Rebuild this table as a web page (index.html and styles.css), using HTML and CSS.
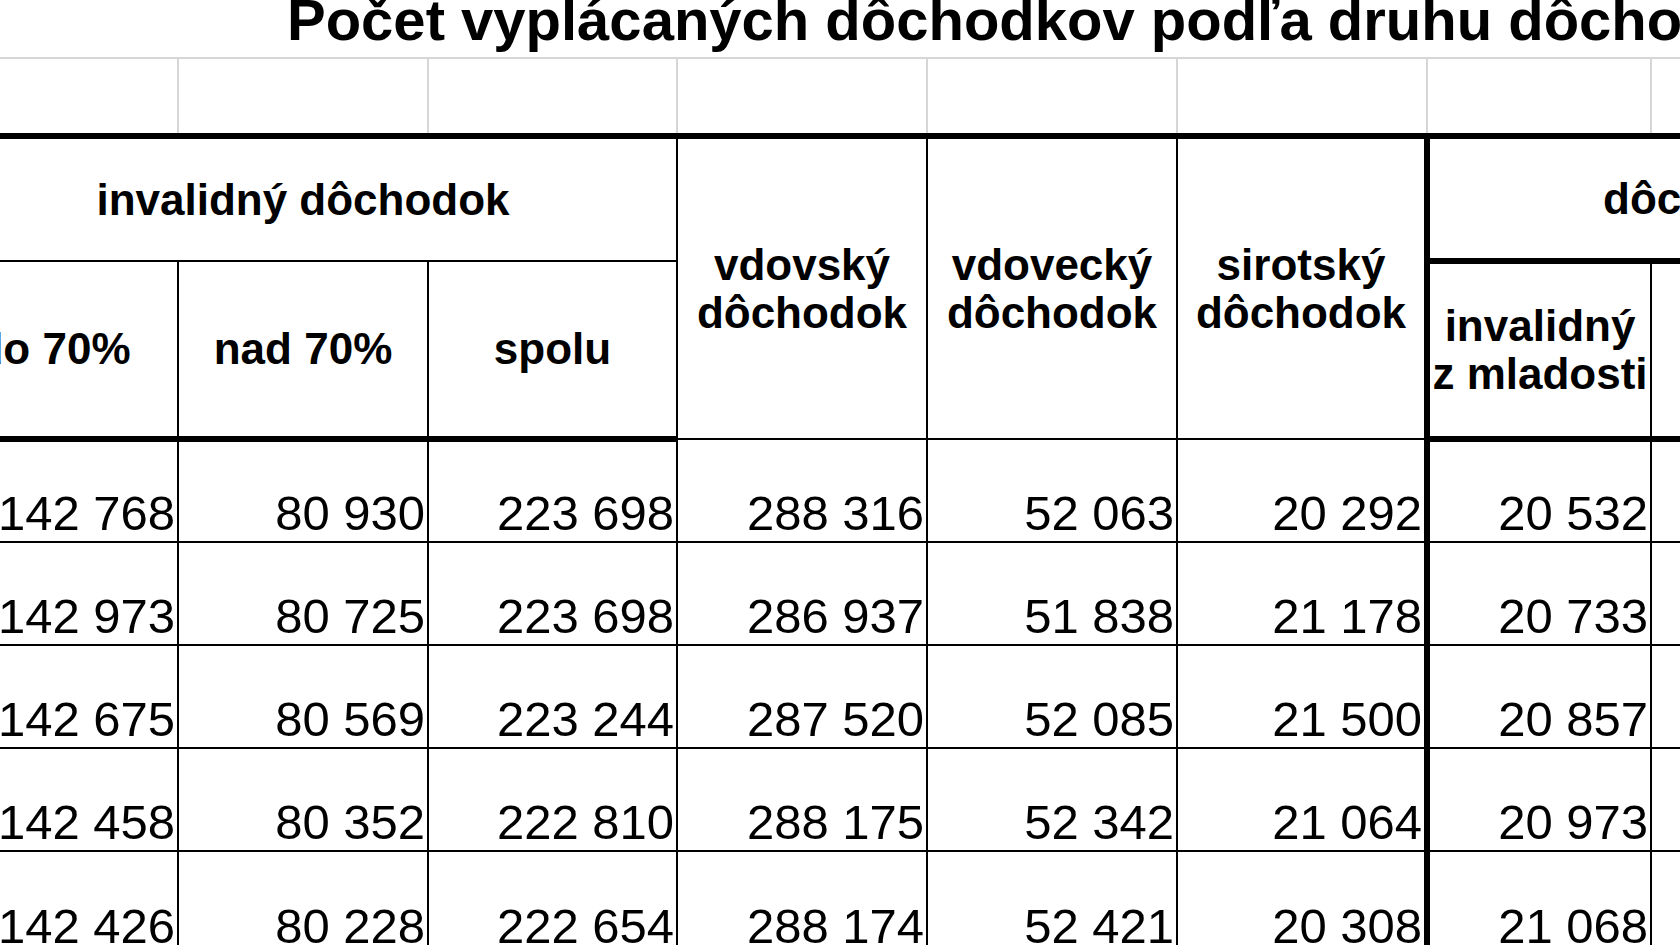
FILE: index.html
```html
<!DOCTYPE html>
<html lang="sk">
<head>
<meta charset="utf-8">
<title>Počet vyplácaných dôchodkov</title>
<link rel="stylesheet" href="styles.css">
</head>
<body>
<div class="sheet">
  <div class="title"><span>Počet vyplácaných dôchodkov podľa druhu dôchodku</span></div>
  <table class="grid">
    <colgroup>
      <col class="w1"><col class="w2"><col class="w3"><col class="w4">
      <col class="w5"><col class="w6"><col class="w7"><col class="w8">
    </colgroup>
    <tr class="r-empty">
      <td class="first"></td><td></td><td></td><td></td><td></td><td></td><td></td><td></td>
    </tr>
    <tr class="r-h1">
      <th colspan="3" class="first">invalidný dôchodok</th>
      <th rowspan="2">vdovský<br>dôchodok</th>
      <th rowspan="2">vdovecký<br>dôchodok</th>
      <th rowspan="2" class="tk-r">sirotský<br>dôchodok</th>
      <th colspan="2" class="group tk-b">dôchodok z mladosti</th>
    </tr>
    <tr class="r-h2">
      <th class="first tk-b">do 70%</th>
      <th class="tk-b">nad 70%</th>
      <th class="tk-b">spolu</th>
      <th class="tk-b tk-l">invalidný<br>z mladosti</th>
      <th class="tk-b"></th>
    </tr>
    <tr class="r-d1">
      <td class="first num">142 768</td><td class="num">80 930</td><td class="num">223 698</td>
      <td class="num">288 316</td><td class="num">52 063</td><td class="num tk-r">20 292</td>
      <td class="num tk-l">20 532</td><td class="num"></td>
    </tr>
    <tr class="r-d2">
      <td class="first num">142 973</td><td class="num">80 725</td><td class="num">223 698</td>
      <td class="num">286 937</td><td class="num">51 838</td><td class="num tk-r">21 178</td>
      <td class="num tk-l">20 733</td><td class="num"></td>
    </tr>
    <tr class="r-d3">
      <td class="first num">142 675</td><td class="num">80 569</td><td class="num">223 244</td>
      <td class="num">287 520</td><td class="num">52 085</td><td class="num tk-r">21 500</td>
      <td class="num tk-l">20 857</td><td class="num"></td>
    </tr>
    <tr class="r-d4">
      <td class="first num">142 458</td><td class="num">80 352</td><td class="num">222 810</td>
      <td class="num">288 175</td><td class="num">52 342</td><td class="num tk-r">21 064</td>
      <td class="num tk-l">20 973</td><td class="num"></td>
    </tr>
    <tr class="r-d5">
      <td class="first num">142 426</td><td class="num">80 228</td><td class="num">222 654</td>
      <td class="num">288 174</td><td class="num">52 421</td><td class="num tk-r">20 308</td>
      <td class="num tk-l">21 068</td><td class="num"></td>
    </tr>
  </table>
</div>
</body>
</html>
```

FILE: styles.css
```css
html, body {
  margin: 0;
  padding: 0;
  background: #fff;
}

body {
  width: 1680px;
  height: 945px;
  overflow: hidden;
  font-family: "Liberation Sans", Arial, sans-serif;
  color: #000;
}

.sheet {
  margin-left: -70px;
  width: 1945px;
}

.title {
  height: 57px;
  box-sizing: border-box;
  display: flex;
  align-items: flex-end;
  padding-left: 357px;
  padding-bottom: 8px;
  font-size: 58px;
  font-weight: bold;
  line-height: 58px;
  white-space: nowrap;
}

.grid {
  border-collapse: collapse;
  table-layout: fixed;
  width: 1945px;
}

.w1 { width: 248px; }
.w2 { width: 250px; }
.w3 { width: 249px; }
.w4 { width: 250px; }
.w5 { width: 250px; }
.w6 { width: 250px; }
.w7 { width: 224px; }
.w8 { width: 224px; }

.grid td,
.grid th {
  padding: 0;
  border: 2px solid #000;
  overflow: hidden;
}

.grid .first {
  border-left: 0;
}

.r-empty td {
  height: 74px;
  border-top: 2px solid #d6d6d6;
  border-left: 2px solid #d6d6d6;
  border-right: 2px solid #d6d6d6;
  border-bottom: 6px solid #000;
}

.r-h1 { height: 125px; }
.r-h2 { height: 178px; }
.r-d1 { height: 103px; }
.r-d2 { height: 103px; }
.r-d3 { height: 103px; }
.r-d4 { height: 103px; }
.r-d5 { height: 104px; }

.grid th {
  font-size: 44px;
  font-weight: bold;
  line-height: 48px;
  text-align: center;
  vertical-align: middle;
}

.grid .tk-r { border-right: 6px solid #000; }
.grid .tk-l { border-left: 6px solid #000; }
.grid .tk-b { border-bottom: 6px solid #000; }

.grid .group {
  text-align: left;
  padding-left: 173px;
  white-space: nowrap;
  border-left: 6px solid #000;
}

.grid .num {
  font-size: 49px;
  line-height: 1.15;
  text-align: right;
  vertical-align: bottom;
  padding: 0 2px 0 0;
  white-space: nowrap;
}
```
